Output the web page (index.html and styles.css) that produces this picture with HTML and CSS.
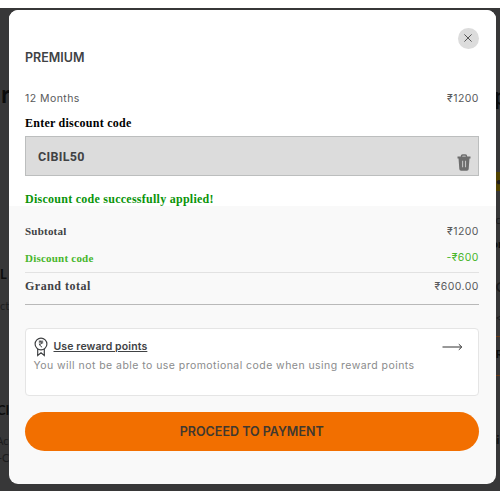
FILE: index.html
```
<!DOCTYPE html>
<html lang="en">
<head>
    <meta charset="UTF-8">
    <meta name="viewport" content="width=device-width, initial-scale=1.0">
    <title>Premium - Checkout</title>

    <link rel="stylesheet" href="styles.css">
</head>
<body>
    <div class="backdrop">
        <!-- Page content showing past the modal edges -->
        <div class="page-left" aria-hidden="true">
            <span class="peek peek-heading">r</span>
            <span class="peek peek-label">L</span>
            <span class="peek peek-act">ct</span>
            <span class="peek peek-cibil">CI</span>
            <span class="peek peek-access">Ac</span>
            <span class="peek peek-credit">-C</span>
        </div>
        <div class="page-right" aria-hidden="true">
            <span class="peek peek-plan">p</span>
            <span class="peek peek-tag">•</span>
            <span class="peek peek-c">c</span>
            <span class="peek peek-or">or</span>
            <span class="peek peek-zero">C</span>
            <span class="peek peek-slash">&lt;</span>
            <span class="peek peek-line"></span>
            <span class="peek peek-r">R</span>
            <span class="peek peek-line2"></span>
            <span class="peek peek-ai">ai</span>
        </div>

        <div class="modal">
            <div class="modal-top">
                <button class="btn-close" aria-label="Close">
                    <svg width="8" height="8" viewBox="0 0 8 8"><path d="M.4.4 7.6 7.6M7.6.4.4 7.6"/></svg>
                </button>
                <h1><span>PREMIUM</span></h1>
                <div class="row plan">
                    <span class="months">12 Months</span>
                    <span class="price">₹1200</span>
                </div>
                <label class="code-label" for="code">Enter discount code</label>
                <div class="code-box">
                    <span class="code" id="code">CIBIL50</span>
                    <svg class="trash" width="14" height="17" viewBox="0 0 14 17">
                        <path class="trash-handle" d="M4.5 3V2.2Q4.5 1 5.7 1h2.6q1.2 0 1.2 1.2V3"/>
                        <path d="M.5 2.5h13v2H.5zM1.5 4h11l-.8 11q-.1 1.8-1.8 1.8H4.1q-1.7 0-1.8-1.8z"/>
                        <path class="trash-slot" d="M5.6 6.8v6.4M8.5 6.8v6.4"/>
                    </svg>
                </div>
                <p class="success">Discount code successfully applied!</p>
            </div>

            <div class="modal-bottom">
                <div class="row subtotal">
                    <span class="name">Subtotal</span>
                    <span class="price">₹1200</span>
                </div>
                <div class="row discount">
                    <span class="name">Discount code</span>
                    <span class="price">-₹600</span>
                </div>
                <div class="row total">
                    <span class="name">Grand total</span>
                    <span class="price">₹600.00</span>
                </div>

                <div class="reward">
                    <div class="reward-head">
                        <svg class="medal" width="14" height="20" viewBox="0 0 14 20">
                            <circle cx="7" cy="7" r="5.9"/>
                            <path d="M3.7 12v6.5L7 15.8l3.3 2.7V12"/>
                            <path class="rupee" d="M4.8 4.2h4.4M4.8 5.9h4.4M5.6 4.2c3 0 3 3.3-.5 3.3l3 2.8"/>
                        </svg>
                        <a class="reward-link">Use reward points</a>
                        <svg class="arrow" width="21" height="8" viewBox="0 0 21 8"><path d="M.5 4h19M16.8 1.2 19.8 4l-3 2.8"/></svg>
                    </div>
                    <p class="reward-note">You will not be able to use promotional code when using reward points</p>
                </div>

                <button class="btn-pay"><span>PROCEED TO PAYMENT</span></button>
            </div>
        </div>
    </div>
</body>
</html>
```

FILE: styles.css
```
* {
    margin: 0;
    padding: 0;
    box-sizing: border-box;
}

body {
    font-family: Lato, 'Noto Sans', sans-serif;
    background: #fff;
    width: 500px;
    height: 500px;
    padding-top: 8px;
    overflow: hidden;
}

.backdrop {
    position: relative;
    height: 483px;
    padding: 2px 4.5px 7px 8.5px;
    background: #373738;
    overflow: hidden;
}

.modal {
    position: relative;
    height: 474px;
    border-radius: 9px;
    overflow: hidden;
    background: #f9f9f9;
}

.modal-top {
    height: 196px;
    padding: 0 17px 0 16.5px;
    background: #fff;
}

.modal-bottom {
    padding: 12px 17px 0 16.5px;
}

.btn-close {
    position: absolute;
    top: 17.5px;
    right: 17px;
    width: 20.5px;
    height: 21px;
    border: none;
    border-radius: 50%;
    background: #dcdcdc;
    display: flex;
    align-items: center;
    justify-content: center;
}

.btn-close path {
    fill: none;
    stroke: #555;
    stroke-width: 1;
}

h1 {
    padding-top: 38px;
    font-family: Inter, sans-serif;
    font-size: 12.5px;
    line-height: 20px;
    font-weight: 600;
    color: #404244;
}

.row {
    display: flex;
    align-items: center;
    justify-content: space-between;
}

.price,
.months {
    font-family: Inter, 'DejaVu Sans', sans-serif;
    font-size: 10.5px;
    letter-spacing: 0.45px;
    color: #58595b;
}

.price {
    margin-right: -0.45px;
}

.plan {
    height: 20px;
    margin-top: 20px;
}

.code-label {
    display: block;
    height: 16px;
    margin-top: 7px;
    font: bold 12px/16px 'Liberation Serif', serif;
    letter-spacing: 0.25px;
    color: #000;
}

.code-box {
    display: flex;
    justify-content: space-between;
    height: 40px;
    margin-top: 5px;
    padding: 0 7px 0 12px;
    background: #dcdcdc;
    border: 1px solid #bcbebe;
}

.code {
    font: bold 12.5px/40px Roboto, sans-serif;
    letter-spacing: 0.3px;
    color: #414244;
}

.trash {
    margin-top: 17px;
    fill: #6d6d6d;
}

.trash-handle {
    fill: none;
    stroke: #6d6d6d;
    stroke-width: 1.4;
}

.trash-slot {
    fill: none;
    stroke: #c3c3c3;
    stroke-width: 1.1;
}

.success {
    margin-top: 15px;
    font: bold 12px/16px 'Liberation Serif', serif;
    letter-spacing: 0.26px;
    color: #0a940a;
}

.name {
    font-family: 'Liberation Serif', serif;
    font-weight: bold;
    font-size: 11px;
    letter-spacing: 0.22px;
    color: #404244;
}

.subtotal {
    height: 26px;
}

.discount {
    height: 28.5px;
    border-bottom: 1px solid #e2e2e2;
}

.discount .name,
.discount .price {
    color: #47b62b;
}

.total {
    height: 32px;
    padding-bottom: 4px;
    border-bottom: 1px solid #b9b9b9;
}

.total .name {
    font-size: 12px;
    letter-spacing: 0.5px;
}

.reward {
    height: 68px;
    margin-top: 23.5px;
    padding: 8px 15px 0 7.5px;
    background: #fff;
    border: 1px solid #e5e5e5;
    border-radius: 4px;
}

.reward-head {
    display: flex;
    align-items: center;
    height: 20px;
}

.medal,
.arrow {
    fill: none;
    stroke: #404244;
    stroke-width: 1.2;
}

.arrow {
    margin-left: auto;
    stroke: #333;
    stroke-width: 1;
}

.rupee {
    stroke-width: 1;
}

.reward-link {
    margin-left: 6px;
    margin-bottom: 2px;
    font-family: Inter, sans-serif;
    font-size: 10.5px;
    font-weight: 600;
    letter-spacing: 0.12px;
    color: #404244;
    text-decoration: underline;
}

.reward-note {
    font-family: Inter, sans-serif;
    font-size: 10.5px;
    line-height: 17px;
    letter-spacing: 0.45px;
    color: #8a8b8c;
    white-space: nowrap;
}

.btn-pay {
    display: block;
    width: 100%;
    height: 39px;
    margin-top: 16px;
    border: none;
    border-radius: 20px;
    background: #f26f00;
    color: #40382f;
    font: 600 12.5px/39px Inter, sans-serif;
}

/* Dimmed page behind the modal */
.page-left .peek {
    position: absolute;
    left: 0;
}

.page-right .peek {
    position: absolute;
    left: 495.5px;
}

.peek {
    font-size: 11px;
    line-height: 14px;
    color: #1c1c1d;
}

.page-left .peek-heading {
    top: 73px;
    left: 1px;
    font-size: 25px;
    line-height: 25px;
    font-weight: bold;
    color: #0c0c0c;
}

.peek-label {
    top: 259px;
    font-size: 13px;
    font-weight: bold;
    color: #0c0c0c;
}

.peek-act {
    top: 291px;
}

.page-left .peek-cibil {
    top: 395px;
    left: -3px;
    font-size: 13px;
    font-weight: bold;
    color: #0c0c0c;
}

.page-left .peek-access {
    top: 426px;
    left: -4px;
}

.page-left .peek-credit {
    top: 443px;
    left: -2px;
}

.page-right .peek-plan {
    top: 75px;
    left: 494px;
    font-size: 24px;
    line-height: 25px;
    font-weight: bold;
    color: #0c0c0c;
}

.peek-tag {
    top: 164px;
    width: 5px;
    height: 19px;
    background: #514300;
    line-height: 19px;
}

.peek-c {
    top: 205px;
}

.page-right .peek-or {
    top: 229px;
    left: 491px;
    font-size: 12px;
    font-weight: bold;
    color: #0c0c0c;
}

.peek-zero {
    top: 272px;
    font-size: 14px;
    font-weight: bold;
}

.peek-slash {
    top: 303px;
}

.peek-line,
.peek-line2 {
    top: 328px;
    width: 5px;
    height: 1px;
    background: #6a3a18;
}

.peek-line2 {
    top: 367px;
}

.peek-r {
    top: 339px;
    font-size: 12px;
    font-weight: bold;
    color: #0c0c0c;
}

.page-right .peek-ai {
    top: 425px;
    left: 491px;
    font-weight: bold;
    color: #0c0c0c;
}
```
